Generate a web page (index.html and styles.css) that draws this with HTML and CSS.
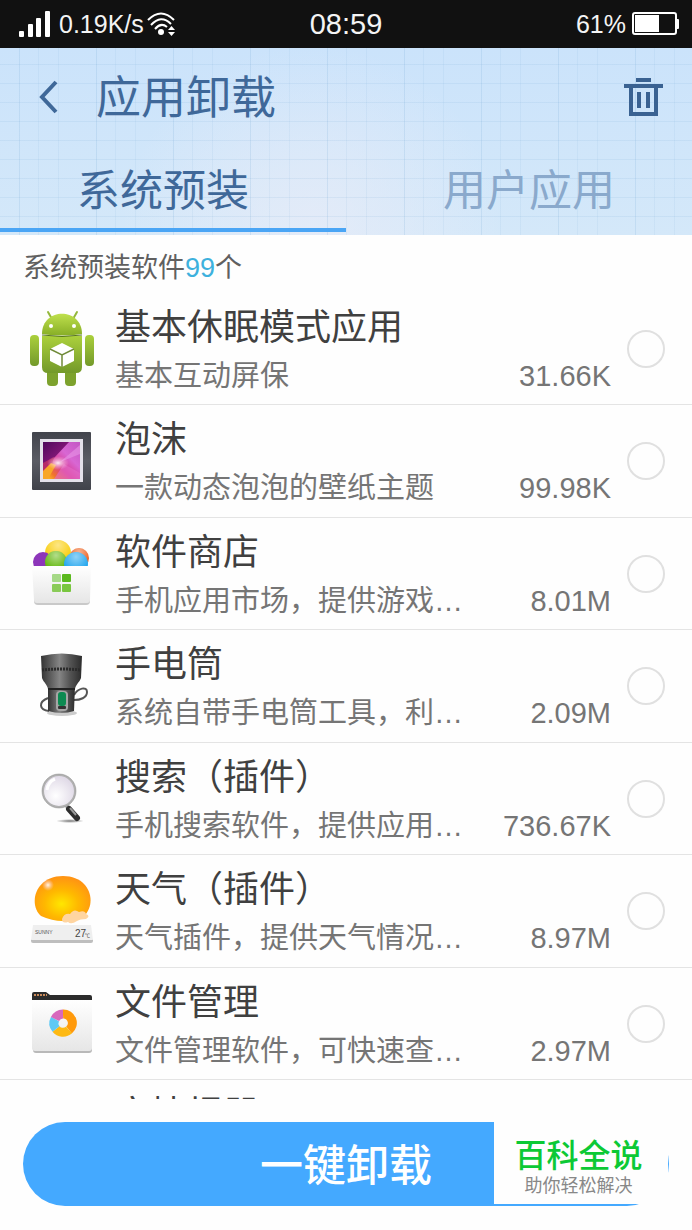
FILE: index.html
```
<!DOCTYPE html>
<html lang="zh-CN">
<head>
    <meta charset="UTF-8">
    <meta name="viewport" content="width=device-width, initial-scale=1.0">
    <title>应用卸载</title>
    <link rel="stylesheet" href="styles.css">
</head>
<body>

    <!-- 状态栏 -->
    <div class="status-bar">
        <div class="status-left">
            <svg class="signal" width="31" height="26" viewBox="0 0 31 26" fill="#fff">
                <rect x="0" y="20" width="5" height="6" rx="1"/>
                <rect x="9" y="13" width="5" height="13" rx="1"/>
                <rect x="17" y="7" width="5" height="19" rx="1"/>
                <rect x="26" y="0" width="5" height="26" rx="1"/>
            </svg>
            <span class="speed">0.19K/s</span>
            <svg class="wifi" width="29" height="24" viewBox="0 0 29 24" fill="none" stroke="#fff" stroke-width="2">
                <path d="M1 8 Q14 -5 27 8"/>
                <path d="M4 13 Q14 2 24 12"/>
                <path d="M8 17 Q14 10 20 15"/>
                <circle cx="14" cy="20" r="3" fill="#fff" stroke="none"/>
                <path d="M21 18 L24.500 14 L28 18 Z M21 20 L24.500 24 L28 20 Z" fill="#fff" stroke="none"/>
            </svg>
        </div>
        <div class="clock">08:59</div>
        <div class="status-right">
            <span>61%</span>
            <svg width="47" height="24" viewBox="0 0 47 24">
                <rect x="1" y="1" width="43" height="21" rx="2" fill="none" stroke="#fff" stroke-width="2"/>
                <rect x="3" y="3" width="24" height="17" fill="#fff"/>
                <rect x="44" y="7" width="3" height="10" rx="1" fill="#fff"/>
            </svg>
        </div>
    </div>

    <!-- 标题和选项卡 -->
    <header class="header">
        <div class="toolbar">
            <button type="button" class="icon-button" aria-label="返回">
                <svg width="20" height="34" viewBox="0 0 20 34" fill="none" stroke="#3f6899" stroke-width="4">
                    <path d="M18 2 L4 17 L18 32"/>
                </svg>
            </button>
            <h1>应用卸载</h1>
            <button type="button" class="icon-button" aria-label="清空">
                <svg width="39" height="38" viewBox="0 0 39 38" fill="#3a6292">
                    <rect x="12" y="0" width="15" height="4"/>
                    <rect x="0" y="6" width="39" height="4"/>
                    <path d="M5 9 H34 V38 H5 Z M9 10 V34 H30 V10 Z" fill-rule="evenodd"/>
                    <rect x="13" y="14" width="4" height="16"/>
                    <rect x="22" y="14" width="4" height="16"/>
                </svg>
            </button>
        </div>
        <nav class="tabs">
            <button type="button" class="tab active">系统预装</button>
            <button type="button" class="tab">用户应用</button>
        </nav>
    </header>

    <!-- 应用列表 -->
    <main class="content">
        <p class="count">系统预装软件<span>99</span>个</p>
        <ul class="app-list">
            <li>
                <label class="app">
                    <svg class="app-icon" width="68" height="80" viewBox="0 0 68 80">
                        <defs>
                            <linearGradient id="robot" x1="0" y1="0" x2="0" y2="1">
                                <stop offset="0" stop-color="#abd03c"/>
                                <stop offset="1" stop-color="#73992a"/>
                            </linearGradient>
                            <linearGradient id="robotHead" x1="0" y1="0" x2="0" y2="1">
                                <stop offset="0" stop-color="#bfe04d"/>
                                <stop offset="1" stop-color="#87ae26"/>
                            </linearGradient>
                        </defs>
                        <path d="M20 3 L24 10 M49 3 L45 10" stroke="#94b83c" stroke-width="2" stroke-linecap="round"/>
                        <rect x="19" y="58" width="11" height="19" rx="4" fill="#7da22d"/>
                        <rect x="37" y="58" width="11" height="19" rx="4" fill="#7da22d"/>
                        <rect x="2" y="26" width="9" height="31" rx="4" fill="url(#robot)"/>
                        <rect x="57" y="26" width="9" height="31" rx="4" fill="url(#robot)"/>
                        <path d="M14 27 H54 V58 Q54 64 48 64 H20 Q14 64 14 58 Z" fill="url(#robot)"/>
                        <path d="M14 25 C14 -2 54 -2 54 25 Q34 28 14 25 Z" fill="url(#robotHead)"/>
                        <path d="M14 26 Q34 29 54 26" fill="none" stroke="#56751f" stroke-width="1"/>
                        <circle cx="23" cy="17" r="2" fill="#fff"/>
                        <circle cx="46" cy="17" r="2" fill="#fff"/>
                        <path d="M34 34 L46 40 V52 L34 58 L22 52 V40 Z" fill="#fff"/>
                        <path d="M22 40 L34 46 L46 40 M34 46 V58" fill="none" stroke="#718b3a" stroke-width="1.500"/>
                    </svg>
                    <span class="name">基本休眠模式应用</span>
                    <span class="desc">基本互动屏保</span>
                    <span class="size">31.66K</span>
                    <input type="checkbox" class="check">
                </label>
            </li>
            <li>
                <label class="app">
                    <svg class="app-icon" width="68" height="80" viewBox="0 0 68 80">
                        <defs>
                            <linearGradient id="photo" x1="0" y1="1" x2="1" y2="0">
                                <stop offset="0" stop-color="#ffdc1e"/>
                                <stop offset="0.2" stop-color="#f0742c"/>
                                <stop offset="0.4" stop-color="#d83a92"/>
                                <stop offset="0.65" stop-color="#d867d3"/>
                                <stop offset="1" stop-color="#c257c4"/>
                            </linearGradient>
                            <linearGradient id="photoDark" x1="0" y1="0" x2="1" y2="1">
                                <stop offset="0" stop-color="#4f0a5c"/>
                                <stop offset="1" stop-color="#a8208c"/>
                            </linearGradient>
                            <radialGradient id="glow">
                                <stop offset="0" stop-color="#fff" stop-opacity="0.9"/>
                                <stop offset="1" stop-color="#ffc8e8" stop-opacity="0"/>
                            </radialGradient>
                            <linearGradient id="frame" x1="0" y1="0" x2="0" y2="1">
                                <stop offset="0" stop-color="#42444c"/>
                                <stop offset="0.5" stop-color="#5a5c64"/>
                                <stop offset="1" stop-color="#40424a"/>
                            </linearGradient>
                        </defs>
                        <rect x="4" y="11" width="59" height="58" rx="1" fill="url(#frame)"/>
                        <rect x="12" y="18" width="43" height="43" fill="#e4e1ea"/>
                        <rect x="15" y="21" width="37" height="37" fill="url(#photo)"/>
                        <path d="M15 21 H41 L26 37 L15 46 Z" fill="url(#photoDark)"/>
                        <path d="M15 42 L26 36 L24 44 L15 52 Z" fill="#b52b68"/>
                        <path d="M15 50 L23 42 L28 44 L20 58 H15 Z" fill="#f8a628"/>
                        <path d="M52 24 L32 41 L52 33 Z" fill="#e894e6" opacity="0.6"/>
                        <path d="M26 58 L36 43 L52 52 V58 Z" fill="#e46cc8" opacity="0.6"/>
                        <ellipse cx="30" cy="42" rx="11" ry="7" fill="url(#glow)"/>
                    </svg>
                    <span class="name">泡沫</span>
                    <span class="desc">一款动态泡泡的壁纸主题</span>
                    <span class="size">99.98K</span>
                    <input type="checkbox" class="check">
                </label>
            </li>
            <li>
                <label class="app">
                    <svg class="app-icon" width="68" height="80" viewBox="0 0 68 80">
                        <defs>
                            <radialGradient id="shine" cx="0.5" cy="0.2" r="0.6">
                                <stop offset="0" stop-color="#fff" stop-opacity="0.5"/>
                                <stop offset="1" stop-color="#fff" stop-opacity="0"/>
                            </radialGradient>
                            <linearGradient id="paper" x1="0" y1="0" x2="0" y2="1">
                                <stop offset="0" stop-color="#fff"/>
                                <stop offset="1" stop-color="#e6e6e6"/>
                            </linearGradient>
                        </defs>
                        <circle cx="51" cy="24" r="10" fill="#ee6424"/>
                        <circle cx="51" cy="24" r="10" fill="url(#shine)"/>
                        <circle cx="30" cy="19" r="13" fill="#f9ce0e"/>
                        <circle cx="30" cy="19" r="13" fill="url(#shine)"/>
                        <circle cx="15" cy="28" r="10" fill="#8d36ba"/>
                        <circle cx="28" cy="28" r="11" fill="#68ba16"/>
                        <circle cx="28" cy="28" r="11" fill="url(#shine)"/>
                        <circle cx="48" cy="30" r="12" fill="#22a6ee"/>
                        <circle cx="48" cy="30" r="12" fill="url(#shine)"/>
                        <path d="M6 33 H62 V67 Q62 71 58 71 H10 Q6 71 6 67 Z" fill="#c9c9c9"/>
                        <path d="M4 32 H63 L62 66 Q62 69 59 69 H9 Q6 69 6 66 Z" fill="url(#paper)"/>
                        <rect x="24" y="40" width="9" height="8" rx="1" fill="#a6d987"/>
                        <rect x="34" y="40" width="9" height="8" rx="1" fill="#5bb91d"/>
                        <rect x="24" y="50" width="9" height="8" rx="1" fill="#8acb58"/>
                        <rect x="34" y="50" width="9" height="8" rx="1" fill="#79c63f"/>
                    </svg>
                    <span class="name">软件商店</span>
                    <span class="desc">手机应用市场，提供游戏…</span>
                    <span class="size">8.01M</span>
                    <input type="checkbox" class="check">
                </label>
            </li>
            <li>
                <label class="app">
                    <svg class="app-icon" width="68" height="80" viewBox="0 0 68 80">
                        <defs>
                            <linearGradient id="torch">
                                <stop offset="0" stop-color="#333"/>
                                <stop offset="0.25" stop-color="#606060"/>
                                <stop offset="0.45" stop-color="#858585"/>
                                <stop offset="0.7" stop-color="#555"/>
                                <stop offset="1" stop-color="#2c2c2c"/>
                            </linearGradient>
                        </defs>
                        <ellipse cx="34" cy="67" rx="15" ry="3" fill="#ccc"/>
                        <path d="M46 49 C50 42 59 40 59 46 C59 52 52 54 46 54 M20 52 C10 56 11 64 21 65" fill="none" stroke="#555" stroke-width="2"/>
                        <path d="M20 40 H47 L46 65 Q34 69 20 65 Z" fill="url(#torch)"/>
                        <path d="M13 10 Q34 5 54 10 L53 32 C51 37 48 38 47 43 H20 C19 38 16 37 14 32 Z" fill="url(#torch)"/>
                        <path d="M14 24 Q34 22 53 24" fill="none" stroke="#2b2b2b" stroke-width="3" stroke-dasharray="2 1"/>
                        <path d="M20 43 H47" stroke="#222" stroke-width="2"/>
                        <rect x="28" y="45" width="12" height="20" rx="4" fill="#a6a6a6"/>
                        <rect x="30" y="46" width="8" height="14" rx="3" fill="#0c8a51"/>
                        <rect x="30" y="60" width="8" height="3" rx="1" fill="#333"/>
                    </svg>
                    <span class="name">手电筒</span>
                    <span class="desc">系统自带手电筒工具，利…</span>
                    <span class="size">2.09M</span>
                    <input type="checkbox" class="check">
                </label>
            </li>
            <li>
                <label class="app">
                    <svg class="app-icon" width="68" height="80" viewBox="0 0 68 80">
                        <defs>
                            <radialGradient id="lens" cx="0.4" cy="0.65" r="0.7">
                                <stop offset="0" stop-color="#fff"/>
                                <stop offset="1" stop-color="#dcd5e4"/>
                            </radialGradient>
                            <radialGradient id="shade">
                                <stop offset="0" stop-color="#777"/>
                                <stop offset="1" stop-color="#777" stop-opacity="0"/>
                            </radialGradient>
                        </defs>
                        <ellipse cx="42" cy="62" rx="14" ry="2" fill="url(#shade)"/>
                        <path d="M38 46 L43 52" stroke="#aaa" stroke-width="4"/>
                        <path d="M41 50 L49 59" stroke="#2e2e2e" stroke-width="6" stroke-linecap="round"/>
                        <path d="M42 49 L48 56" stroke="#999" stroke-width="2"/>
                        <circle cx="31" cy="32" r="16" fill="url(#lens)" stroke="#b1b1b1" stroke-width="2"/>
                        <circle cx="31" cy="32" r="17" fill="none" stroke="#8c8c8c" stroke-width="0.500"/>
                        <path d="M19 31 Q20 23 27 20" fill="none" stroke="#fff" stroke-width="3"/>
                    </svg>
                    <span class="name">搜索（插件）</span>
                    <span class="desc">手机搜索软件，提供应用…</span>
                    <span class="size">736.67K</span>
                    <input type="checkbox" class="check">
                </label>
            </li>
            <li>
                <label class="app">
                    <svg class="app-icon" width="68" height="80" viewBox="0 0 68 80">
                        <defs>
                            <radialGradient id="sun" cx="0.48" cy="0.62" r="0.6">
                                <stop offset="0" stop-color="#ffe700"/>
                                <stop offset="0.5" stop-color="#ffb800"/>
                                <stop offset="1" stop-color="#ff9413"/>
                            </radialGradient>
                        </defs>
                        <path d="M13 45 C0 33 7 5 35 5 C63 5 69 33 56 45 Q35 55 13 45 Z" fill="url(#sun)"/>
                        <circle cx="20" cy="14" r="6" fill="url(#glow)"/>
                        <path d="M34 48 Q36 42 42 43 Q46 37 51 41 Q57 39 58 43 Q63 45 58 48 Q52 48 49 50 Q43 54 40 51 Q34 53 34 48 Z" fill="#ffd5a1"/>
                        <path d="M3 68 H65 V70 Q65 72 63 72 H5 Q3 72 3 70 Z" fill="#bebebe"/>
                        <path d="M5 54 H63 L65 69 H3 Z" fill="#efefef"/>
                        <text x="7" y="63" class="weather-label">SUNNY</text>
                        <text x="47" y="66" class="weather-temp">27</text>
                        <text x="57" y="66" class="weather-label">℃</text>
                    </svg>
                    <span class="name">天气（插件）</span>
                    <span class="desc">天气插件，提供天气情况…</span>
                    <span class="size">8.97M</span>
                    <input type="checkbox" class="check">
                </label>
            </li>
            <li>
                <label class="app">
                    <svg class="app-icon" width="68" height="80" viewBox="0 0 68 80">
                        <path d="M5 18 H64 V66 Q64 69 61 69 H8 Q5 69 5 66 Z" fill="#b9b9b9"/>
                        <path d="M4 16 H64 V64 Q64 67 61 67 H7 Q4 67 4 64 Z" fill="url(#paper)"/>
                        <path d="M4 16 V10 Q4 8 6 8 H18 L22 11 H62 Q64 11 64 13 V16 Z" fill="#2c2c2c"/>
                        <path d="M6 11 H19" stroke="#c98a5a" stroke-width="2" stroke-dasharray="2 1"/>
                        <g fill="none" stroke-width="9">
                            <path d="M35 30 A9 9 0 0 1 41 46" stroke="#ff9a0c"/>
                            <path d="M41 46 A9 9 0 0 1 28 45" stroke="#fdb913"/>
                            <path d="M28 45 A9 9 0 0 1 27 35" stroke="#5fc9f5"/>
                            <path d="M27 35 A9 9 0 0 1 35 30" stroke="#d868bc"/>
                        </g>
                    </svg>
                    <span class="name">文件管理</span>
                    <span class="desc">文件管理软件，可快速查…</span>
                    <span class="size">2.97M</span>
                    <input type="checkbox" class="check">
                </label>
            </li>
            <li>
                <label class="app">
                    <span class="name">文情报器</span>
                </label>
            </li>
        </ul>
    </main>

    <!-- 底部操作 -->
    <footer class="footer">
        <button type="button" class="uninstall">一键卸载</button>
        <div class="brand">
            <strong>百科全说</strong>
            <span>助你轻松解决</span>
        </div>
    </footer>

</body>
</html>
```
FILE: styles.css
```
* {
    box-sizing: border-box;
}

body {
    font-family: "Liberation Sans", "Noto Sans CJK SC", sans-serif;
    margin: 0;
    height: 100vh;
    display: flex;
    flex-direction: column;
    background-color: #fefefe;
    color: #404040;
}

button {
    font-family: inherit;
    border: none;
    background: none;
    padding: 0;
    cursor: pointer;
}

svg {
    display: block;
    flex-shrink: 0;
}

/* 状态栏 */
.status-bar {
    height: 48px;
    flex-shrink: 0;
    display: grid;
    grid-template-columns: 1fr auto 1fr;
    align-items: center;
    padding: 0 13px;
    background-color: #111;
    color: #f4f4f4;
    font-size: 25px;
}

.status-left,
.status-right {
    display: flex;
    align-items: center;
}

.status-left {
    gap: 3px;
    padding-left: 6px;
}

.speed {
    margin-left: 6px;
}

.status-right {
    justify-content: flex-end;
    gap: 6px;
}

.clock {
    font-size: 29px;
}

/* 标题区，带网格背景 */
.header {
    flex-shrink: 0;
    padding-bottom: 3px;
    background-image:
        repeating-linear-gradient(to right, transparent 0 19px, rgba(90, 150, 200, 0.15) 19px 20px, transparent 20px 38px, rgba(90, 150, 200, 0.08) 38px 39px, transparent 39px 58px, rgba(90, 150, 200, 0.08) 58px 59px, transparent 59px 77px),
        repeating-linear-gradient(to bottom, transparent 0 16px, rgba(90, 150, 200, 0.1) 16px 17px, transparent 17px 19px),
        radial-gradient(circle at 45% 100%, rgba(232, 236, 248, 0.8), transparent 45%),
        linear-gradient(#cbe3fb, #d4e8f9);
}

.toolbar {
    height: 97px;
    display: flex;
    align-items: center;
    padding: 0 29px 0 38px;
}

.toolbar h1 {
    flex: 1;
    margin: 0 0 0 38px;
    padding-top: 4px;
    font-size: 45px;
    font-weight: 400;
    line-height: 60px;
    color: #3f6899;
}

.tabs {
    display: flex;
}

.tab {
    flex: 1;
    height: 87px;
    padding: 8px 0 0 20px;
    border-bottom: 4px solid transparent;
    font-size: 43px;
    line-height: 60px;
    color: #8aa9cc;
}

.tab.active {
    padding: 8px 20px 0 0;
    color: #3f6899;
    border-bottom-color: #4aa5f5;
}

/* 列表 */
.content {
    flex: 1;
    min-height: 0;
    overflow: hidden;
}

.count {
    height: 58px;
    margin: 0;
    padding: 13px 23px 0;
    font-size: 27px;
    line-height: 40px;
    color: #606060;
}

.count span {
    color: #3db1dd;
}

.app-list {
    list-style: none;
    margin: 0;
    padding: 0;
}

.app {
    display: grid;
    grid-template-columns: 68px 1fr auto 38px;
    grid-template-rows: 49px 49px;
    align-items: center;
    padding: 7px 27px 6px 28px;
    border-bottom: 1px solid #e4e4e4;
    cursor: pointer;
}

li:nth-child(even) .app {
    padding-bottom: 7px;
}

.app-icon {
    grid-column: 1;
    grid-row: 1 / 3;
}

.name,
.desc,
.size {
    align-self: end;
    line-height: 43px;
    white-space: nowrap;
}

.name,
.desc {
    grid-column: 2;
    margin-left: 19px;
}

.name {
    grid-row: 1;
    font-size: 36px;
}

.desc,
.size {
    grid-row: 2;
    font-size: 29px;
    color: #757575;
}

.size {
    grid-column: 3;
    margin-right: 16px;
}

.check {
    grid-column: 4;
    grid-row: 1 / 3;
    appearance: none;
    width: 38px;
    height: 38px;
    margin: 0;
    border: 2px solid #e0e0e0;
    border-radius: 50%;
}

.check:checked {
    background-color: #44a9ff;
}

.weather-label {
    font-size: 5px;
    fill: #555;
}

.weather-temp {
    font-size: 10px;
    fill: #444;
}

/* 底部 */
.footer {
    position: relative;
    flex-shrink: 0;
    padding: 23px 23px 24px;
}

.uninstall {
    display: block;
    width: 100%;
    height: 84px;
    padding-bottom: 4px;
    border-radius: 42px;
    background-color: #44a9ff;
    color: #fff;
    font-size: 43px;
    font-weight: 500;
}

.brand {
    position: absolute;
    top: 23px;
    right: 24px;
    width: 174px;
    height: 82px;
    padding: 15px 5px 0 0;
    background-color: #fefefe;
    text-align: center;
}

.brand strong,
.brand span {
    display: block;
}

.brand strong {
    font-size: 32px;
    font-weight: 500;
    line-height: 38px;
    color: #0cc935;
}

.brand span {
    font-size: 18px;
    line-height: 22px;
    color: #888;
}
```
